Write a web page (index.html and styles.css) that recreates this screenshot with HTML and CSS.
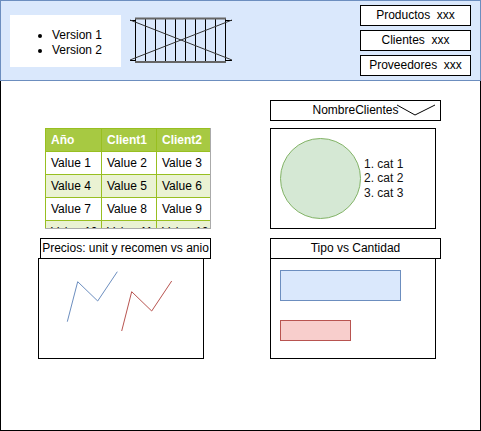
FILE: index.html
```html
<!DOCTYPE html>
<html lang="es">
<head>
  <meta charset="UTF-8">
  <meta name="viewport" content="width=device-width, initial-scale=1.0">
  <title>Mockup Dashboard</title>
  <link rel="stylesheet" href="styles.css">
</head>
<body>
  <div class="header">
    <div class="versions">
      <ul>
        <li>Version 1</li>
        <li>Version 2</li>
      </ul>
    </div>
    <svg class="slider" width="106" height="48" viewBox="0 0 106 48">
      <g stroke="#000" stroke-width="1" fill="none">
        <line x1="7.5" y1="2" x2="7.5" y2="46"/>
        <line x1="17.5" y1="2" x2="17.5" y2="46"/>
        <line x1="27.5" y1="2" x2="27.5" y2="46"/>
        <line x1="37.5" y1="2" x2="37.5" y2="46"/>
        <line x1="47.5" y1="2" x2="47.5" y2="46"/>
        <line x1="57.5" y1="2" x2="57.5" y2="46"/>
        <line x1="67.5" y1="2" x2="67.5" y2="46"/>
        <line x1="77.5" y1="2" x2="77.5" y2="46"/>
        <line x1="87.5" y1="2" x2="87.5" y2="46"/>
        <line x1="97.5" y1="2" x2="97.5" y2="46"/>
        <line x1="2" y1="4.5" x2="7" y2="4.5"/>
        <line x1="2" y1="44.5" x2="7" y2="44.5"/>
        <line x1="98" y1="4.5" x2="104" y2="4.5"/>
        <line x1="98" y1="44.5" x2="104" y2="44.5"/>
        <line x1="2" y1="4" x2="104" y2="44" stroke="#333"/>
        <line x1="2" y1="44" x2="104" y2="4" stroke="#333"/>
      </g>
      <g stroke="#666" stroke-width="2">
        <line x1="7" y1="2.5" x2="98" y2="2.5"/>
        <line x1="7" y1="46" x2="98" y2="46"/>
      </g>
    </svg>
    <div class="counters">
      <div class="counter">Productos&nbsp; xxx</div>
      <div class="counter">Clientes&nbsp; xxx</div>
      <div class="counter">Proveedores&nbsp; xxx</div>
    </div>
  </div>

  <div class="main">
    <div class="cell">
      <div class="table-box">
        <table>
          <colgroup>
            <col style="width: 56px">
            <col style="width: 55px">
            <col style="width: 54px">
          </colgroup>
          <tr class="head"><th>Año</th><th>Client1</th><th>Client2</th></tr>
          <tr><td>Value 1</td><td>Value 2</td><td>Value 3</td></tr>
          <tr class="alt"><td>Value 4</td><td>Value 5</td><td>Value 6</td></tr>
          <tr><td>Value 7</td><td>Value 8</td><td>Value 9</td></tr>
          <tr class="alt"><td>Value 10</td><td>Value 11</td><td>Value 12</td></tr>
        </table>
      </div>
    </div>

    <div class="cell">
      <div class="dropdown">
        NombreClientes
        <svg class="chevron" width="169" height="19" viewBox="0 0 169 19">
          <polyline points="126,4 144,14 164,4" fill="none" stroke="#000" stroke-width="1"/>
        </svg>
      </div>
      <div class="pie-box">
        <div class="pie"></div>
        <ol class="cats">
          <li>cat 1</li>
          <li>cat 2</li>
          <li>cat 3</li>
        </ol>
      </div>
    </div>

    <div class="cell">
      <div class="chart-title title-left">Precios: unit y recomen vs anio</div>
      <div class="chart">
        <svg width="164" height="99" viewBox="0 0 164 99">
          <polyline points="28.3,62.7 38.7,22.7 58.7,42 78.3,12.7" fill="none" stroke="#6c8ebf" stroke-width="1"/>
          <polyline points="82.7,72 92.7,32.7 112.7,52 132.7,22" fill="none" stroke="#b85450" stroke-width="1"/>
        </svg>
      </div>
    </div>

    <div class="cell">
      <div class="chart-title">Tipo vs Cantidad</div>
      <div class="chart bars">
        <div class="bar bar-blue"></div>
        <div class="bar bar-red"></div>
      </div>
    </div>
  </div>
</body>
</html>
```

FILE: styles.css
```css
* {
  box-sizing: border-box;
}
body, html {
  margin: 0;
  padding: 0;
  background: #fff;
}
body {
  width: 481px;
  height: 431px;
  font-family: 'Liberation Sans', Arial, sans-serif;
  font-size: 12px;
  color: #000;
}

/* top bar */
.header {
  display: flex;
  align-items: flex-start;
  width: 481px;
  height: 81px;
  background: #dae8fc;
  border: 1px solid #6c8ebf;
}
.versions {
  width: 111px;
  height: 52px;
  margin: 14px 0 0 9px;
  background: #fff;
  padding-top: 13px;
}
.versions ul {
  margin: 0;
  padding-left: 42px;
  line-height: 15px;
}
.slider {
  display: block;
  margin: 15px 0 0 7px;
}
.counters {
  display: flex;
  flex-direction: column;
  gap: 4px;
  margin: 4px 9px 0 auto;
}
.counter {
  width: 111px;
  height: 21px;
  border: 1px solid #000;
  background: #fff;
  text-align: center;
  line-height: 19px;
}

/* main frame */
.main {
  display: grid;
  grid-template-columns: 173px 171px;
  grid-template-rows: 128px 121px;
  column-gap: 59px;
  row-gap: 10px;
  width: 481px;
  height: 350px;
  padding: 19px 0 0 37px;
  border: 1px solid #000;
  border-top: none;
}

.table-box {
  width: 166px;
  height: 101px;
  margin: 28px 0 0 7px;
  overflow: hidden;
  border-right: 1px solid #aaa;
  border-bottom: 1px solid #aaa;
}
table {
  width: 165px;
  table-layout: fixed;
  border-collapse: collapse;
}
th, td {
  height: 23px;
  padding: 0 5px;
  text-align: left;
  border: 1px solid #98bf21;
  white-space: nowrap;
  overflow: hidden;
}
.head {
  background: #a7c942;
  color: #fff;
}
.head th {
  font-weight: bold;
}
.alt {
  background: #eaf2d3;
}

.dropdown {
  position: relative;
  width: 171px;
  height: 21px;
  border: 1px solid #000;
  text-align: center;
  line-height: 19px;
}
.chevron {
  position: absolute;
  top: 0;
  left: 0;
}
.pie-box {
  display: flex;
  align-items: center;
  width: 166px;
  height: 101px;
  margin-top: 7px;
  padding-left: 9px;
  border: 1px solid #000;
}
.pie {
  width: 81px;
  height: 81px;
  border-radius: 50%;
  background: #d5e8d4;
  border: 1px solid #82b366;
}
.cats {
  margin: 0 0 0 3px;
  padding: 0;
  list-style-position: inside;
  line-height: 14.5px;
  color: #111;
}

.chart-title {
  width: 171px;
  height: 21px;
  border: 1px solid #000;
  text-align: center;
  line-height: 19px;
  white-space: nowrap;
}
.title-left {
  margin-left: 2px;
}
.chart {
  width: 166px;
  height: 101px;
  margin-top: -1px;
  border: 1px solid #000;
}
.chart svg {
  display: block;
}
.bars {
  padding: 11px 0 0 9px;
}
.bar {
  height: 31px;
}
.bar-blue {
  width: 121px;
  background: #dae8fc;
  border: 1px solid #6c8ebf;
}
.bar-red {
  width: 71px;
  height: 21px;
  margin-top: 19px;
  background: #f8cecc;
  border: 1px solid #b85450;
}
```
